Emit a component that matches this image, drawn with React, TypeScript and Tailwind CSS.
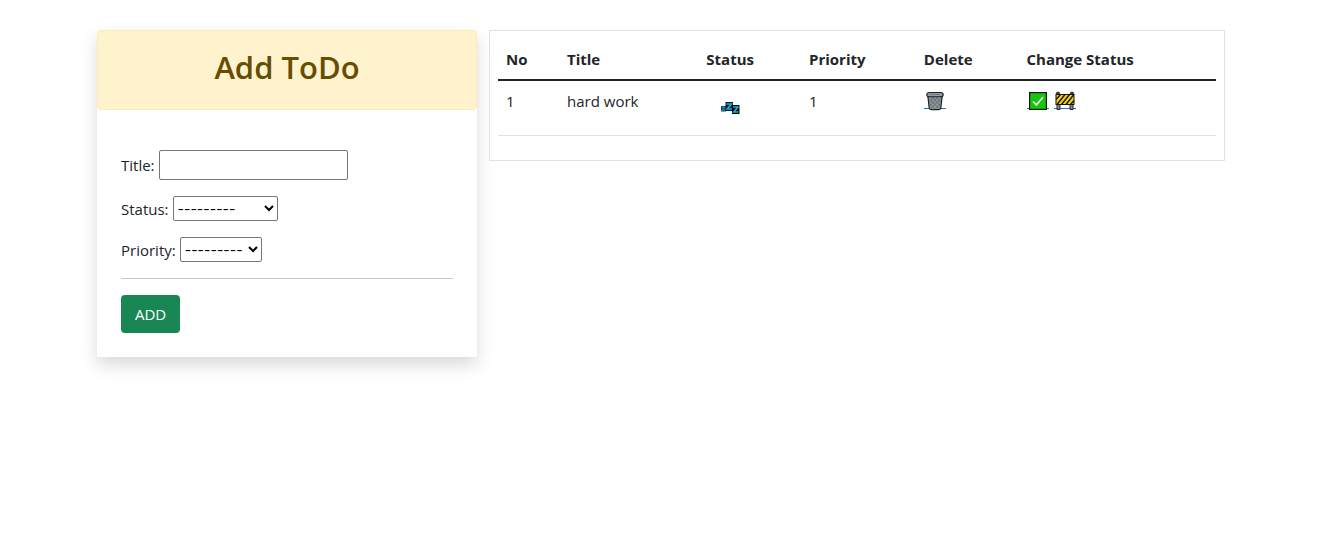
import React, { useState } from "react";

function ZzzIcon() {
  return (
    <svg width="20" height="14" viewBox="0 0 20 14" aria-hidden="true">
      <rect x="1" y="5" width="5" height="5.5" fill="#12465c" />
      <path d="M2 6.400h2.800L2.300 9.200H5" fill="none" stroke="#1c87ae" strokeWidth="1.100" />
      <rect x="5.500" y="1" width="7.500" height="9" fill="#0d1d25" />
      <path d="M6.500 3h4.800L7.300 8h4.700" fill="none" stroke="#1fa8da" strokeWidth="1.700" />
      <rect x="12" y="4" width="7.500" height="9" fill="#05090b" />
      <path d="M13 6h4.800L13.800 11h4.700" fill="none" stroke="#1fa8da" strokeWidth="1.700" />
    </svg>
  );
}

function TrashIcon() {
  return (
    <svg width="22" height="20" viewBox="0 0 22 20" aria-hidden="true">
      <path d="M0 17.500h22" stroke="#2a6fd6" />
      <path d="M3.800 4.500 5.200 17q.2 1.500 2.200 1.700h7.200q2-.2 2.200-1.700L18.200 4.500Z" fill="#8a979b" stroke="#1b1f20" strokeWidth="1.200" />
      <path
        d="m5 7.500 10 10M8.500 6.500l7.500 8M12.500 6.500l4 4.500M6 13l4 4.500M17 7.500l-10 10M13.500 6.500l-7.500 8M9.500 6.500l-4 4.500M16 13l-4 4.500"
        stroke="#5c686b"
        strokeWidth="0.800"
      />
      <path d="M2.800 3.700q0-2.200 2.700-2.200h11q2.700 0 2.700 2.200 0 2-2.700 2h-11q-2.700 0-2.700-2Z" fill="#94a1a5" stroke="#1b1f20" strokeWidth="1.100" />
      <path d="M5.500 3.500h11" stroke="#6c797d" />
    </svg>
  );
}

function DoneIcon() {
  return (
    <svg width="22" height="20" viewBox="0 0 22 20" aria-hidden="true">
      <path d="M0 17.500h22" stroke="#2a6fd6" />
      <rect x="2.600" y="1.600" width="16.800" height="16.800" fill="#16c60c" stroke="#0a160a" strokeWidth="1.200" />
      <path d="m6 10.500 3.400 3.400L16 6.300" fill="none" stroke="#fff" strokeWidth="1.600" />
    </svg>
  );
}

function BarrierIcon() {
  return (
    <svg width="22" height="20" viewBox="0 0 22 20" aria-hidden="true">
      <path d="M0 17.500h22" stroke="#2a6fd6" />
      <path d="M3 12h3v6.500H3ZM16 12h3v6.500h-3Z" fill="#7f8d91" stroke="#222" />
      <circle cx="4" cy="2.800" r="1.700" fill="#7a2a26" stroke="#111" strokeWidth="0.800" />
      <circle cx="18" cy="2.800" r="1.700" fill="#7a2a26" stroke="#111" strokeWidth="0.800" />
      <rect x="2" y="3.500" width="18" height="10" fill="#f7d516" />
      <path
        d="M2 8.500 6.500 3.500M3 13.500l8-10M7.500 13.500l8-10M12 13.500l7.500-9.500M16.500 13.500l3.500-4"
        stroke="#1d1a0a"
        strokeWidth="1.500"
      />
      <rect x="2" y="3.500" width="18" height="10" fill="none" stroke="#17140a" />
    </svg>
  );
}

const selectClass =
  "h-[25px] rounded-[2px] border border-[#767676] bg-white font-['Inter',sans-serif] text-sm text-black";

function AddTodo() {
  const [title, setTitle] = useState("");
  return (
    <section className="bg-white shadow-[0_8px_16px_rgba(0,0,0,0.15)]">
      <header className="rounded border border-[#ffecb5] bg-[#fff3cd] px-4 pt-[17px] pb-[23px] text-center">
        <h1 className="text-[31px] leading-[38px] font-semibold text-[#664d03]">Add ToDo</h1>
      </header>
      <form className="px-6 pt-10 pb-6" onSubmit={(e) => e.preventDefault()}>
        <div className="mb-4 flex items-center gap-1">
          <label htmlFor="title">Title:</label>
          <input
            id="title"
            type="text"
            value={title}
            onChange={(e) => setTitle(e.target.value)}
            className="h-[30px] w-[189px] rounded-[2px] border border-[#767676] px-1 text-black"
          />
        </div>
        <div className="mb-4 flex items-center gap-1">
          <label htmlFor="status">Status:</label>
          <select id="status" className={`${selectClass} w-[105px]`}>
            <option>---------</option>
          </select>
        </div>
        <div className="mb-4 flex items-center gap-1">
          <label htmlFor="priority">Priority:</label>
          <select id="priority" className={`${selectClass} w-[82px]`}>
            <option>---------</option>
          </select>
        </div>
        <hr className="mb-4 border-[#c8c9ca]" />
        <button type="submit" className="rounded bg-[#198754] px-[14px] py-[7px] text-white">
          ADD
        </button>
      </form>
    </section>
  );
}

function TodoTable() {
  return (
    <section className="border border-[#dee2e6] p-2 pb-6">
      <table className="w-full table-fixed text-left">
        <colgroup>
          <col className="w-[8.5%]" />
          <col className="w-[19.4%]" />
          <col className="w-[14.3%]" />
          <col className="w-[16%]" />
          <col className="w-[14.3%]" />
          <col />
        </colgroup>
        <thead>
          <tr className="border-b-2 border-[#212529]">
            <th className="p-2 font-bold">No</th>
            <th className="p-2 font-bold">Title</th>
            <th className="p-2 font-bold">Status</th>
            <th className="p-2 font-bold">Priority</th>
            <th className="p-2 font-bold">Delete</th>
            <th className="p-2 font-bold">Change Status</th>
          </tr>
        </thead>
        <tbody>
          <tr className="border-b border-[#dee2e6] align-top">
            <td className="p-2">1</td>
            <td className="p-2">hard work</td>
            <td className="px-[22px] pt-5 pb-5">
              <ZzzIcon />
            </td>
            <td className="p-2">1</td>
            <td className="p-2">
              <a href="#delete" aria-label="Delete" className="inline-flex pt-[2px]">
                <TrashIcon />
              </a>
            </td>
            <td className="p-2">
              <div className="flex gap-[5px] pt-[2px]">
                <a href="#done" aria-label="Mark as done">
                  <DoneIcon />
                </a>
                <a href="#in-progress" aria-label="Mark as in progress">
                  <BarrierIcon />
                </a>
              </div>
            </td>
          </tr>
        </tbody>
      </table>
    </section>
  );
}

export default function App() {
  return (
    <main className="pt-[30px] pr-4 pb-8 font-['Open_Sans','Noto_Sans',sans-serif] text-[15px] leading-6 text-[#212529]">
      <div className="mx-auto grid max-w-[1128px] grid-cols-1 items-start gap-3 md:grid-cols-[380fr_736fr]">
        <AddTodo />
        <TodoTable />
      </div>
    </main>
  );
}
